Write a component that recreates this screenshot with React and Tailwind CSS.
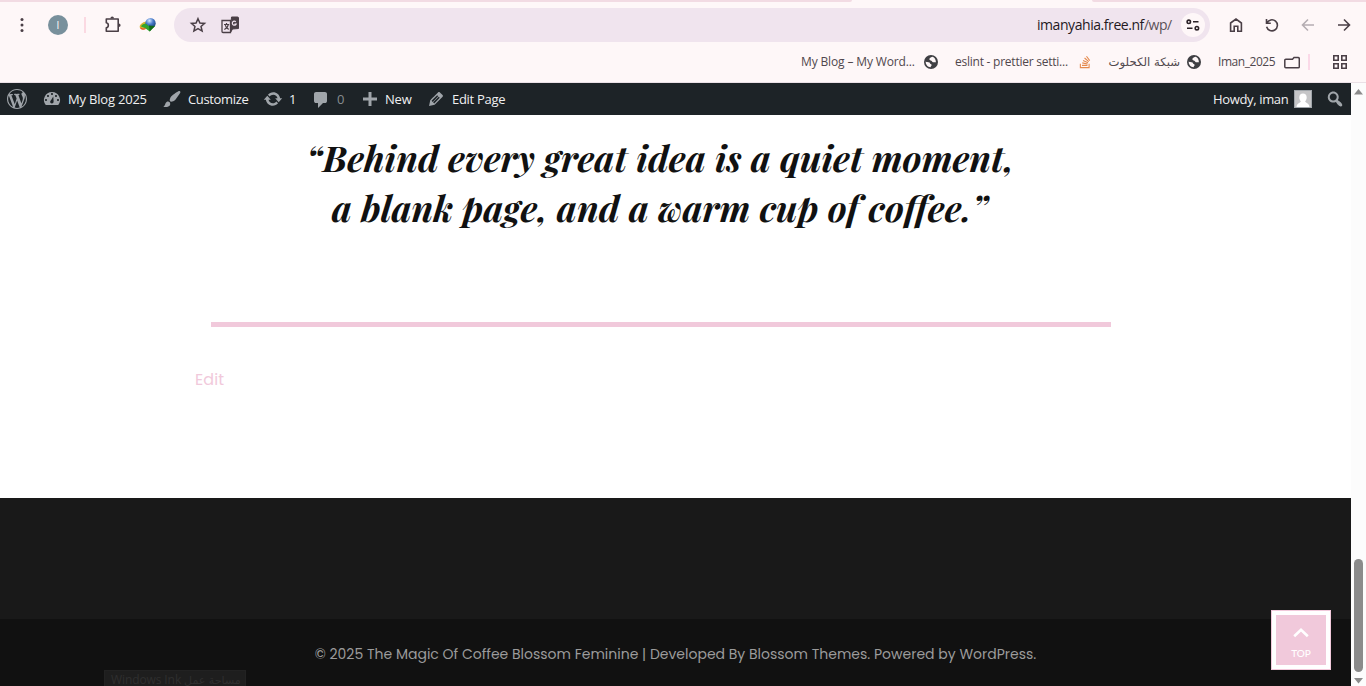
import React from "react";
import { FaStackOverflow } from "react-icons/fa";

const SEGOE = "font-['Open_Sans','Noto_Sans',sans-serif] whitespace-nowrap shrink-0";

function Dash({ d, className }) {
  return (
    <svg viewBox="0 0 20 20" className={`h-5 w-5 shrink-0 ${className}`} fill="#a0a5aa" fillRule="evenodd">
      <path d={d} />
    </svg>
  );
}

const ICONS = {
  wordpress:
    "M20 10c0-5.51-4.49-10-10-10C4.48 0 0 4.49 0 10c0 5.52 4.48 10 10 10 5.51 0 10-4.48 10-10zM7.78 15.37L4.37 6.22c.55-.02 1.17-.08 1.17-.08.5-.06.44-1.13-.06-1.11 0 0-1.45.11-2.37.11-.18 0-.37 0-.58-.01C4.12 2.69 6.87 1.11 10 1.11c2.33 0 4.45.87 6.05 2.34-.68-.11-1.65.39-1.65 1.58 0 .74.45 1.36.9 2.1.35.61.55 1.36.55 2.46 0 1.49-1.4 5-1.4 5l-3.03-8.37c.54-.02.82-.17.82-.17.5-.05.44-1.25-.06-1.22 0 0-1.44.12-2.38.12-.87 0-2.33-.12-2.33-.12-.5-.03-.56 1.2-.06 1.22l.92.08 1.26 3.41zM17.41 10c.24-.64.74-1.87.43-4.25.7 1.29 1.05 2.71 1.05 4.25 0 3.29-1.73 6.24-4.4 7.78.97-2.59 1.94-5.2 2.92-7.78zM6.1 18.09C3.12 16.65 1.11 13.53 1.11 10c0-1.3.23-2.48.72-3.59C3.25 10.3 4.67 14.2 6.1 18.09zm4.03-6.63l2.58 6.98c-.86.29-1.76.45-2.71.45-.79 0-1.57-.11-2.29-.33.81-2.38 1.62-4.74 2.42-7.1z",
  dashboard:
    "M3.76 16h12.48A7.998 7.998 0 0 0 10 3a7.998 7.998 0 0 0-6.24 13zM10 4c.55 0 1 .45 1 1s-.45 1-1 1-1-.45-1-1 .45-1 1-1zM6 6c.55 0 1 .45 1 1s-.45 1-1 1-1-.45-1-1 .45-1 1-1zm8 0c.55 0 1 .45 1 1s-.45 1-1 1-1-.45-1-1 .45-1 1-1zM11.3 7.4l.3 5.1c0 1.1-.7 2-1.7 2s-1.9-.9-1.7-2c.1-.6.5-1 .8-1.3zM4 10c.55 0 1 .45 1 1s-.45 1-1 1-1-.45-1-1 .45-1 1-1zm12 0c.55 0 1 .45 1 1s-.45 1-1 1-1-.45-1-1 .45-1 1-1z",
  brush:
    "M18.33 3.57s.27-.8-.31-1.36c-.53-.52-1.22-.24-1.22-.24-.61.3-5.76 3.47-7.67 5.57-.86.96-2.06 3.79-1.09 4.82.92.98 3.96-.17 4.79-1 2.06-2.06 5.21-7.17 5.5-7.79zM1.4 17.65c2.37-1.56 1.46-3.41 3.23-4.64.93-.65 2.22-.62 3.08.29.63.67.8 2.57-.16 3.46-1.57 1.45-4 1.55-6.15.89z",
  update:
    "M10.2 3.28c3.53 0 6.43 2.61 6.92 6h2.08l-3.5 4-3.5-4h2.32c-.45-1.97-2.21-3.45-4.32-3.45-1.45 0-2.73.71-3.54 1.78L4.95 5.66C6.23 4.2 8.11 3.28 10.2 3.28zm-.4 13.44c-3.52 0-6.43-2.61-6.92-6H.8l3.5-4c1.17 1.33 2.33 2.67 3.5 4H5.48c.45 1.97 2.21 3.45 4.32 3.45 1.45 0 2.73-.71 3.54-1.78l1.71 1.95c-1.28 1.46-3.15 2.38-5.25 2.38z",
  comment:
    "M5 2h9q.82 0 1.41.59T16 4v7q0 .82-.59 1.41T14 13h-2l-5 5v-5H5q-.82 0-1.41-.59T3 11V4q0-.82.59-1.41T5 2z",
  plus: "M17 8.5v3h-5.5V17h-3v-5.5H3v-3h5.5V3h3v5.5z",
  edit: "M13.89 3.39l2.71 2.72c.46.46.42 1.24.03 1.64l-8.01 8.02-5.56 1.16 1.16-5.58s7.6-7.63 7.99-8.03c.39-.39 1.22-.39 1.68.07zm-2.73 2.79l-5.59 5.61 1.11 1.11 5.54-5.65zm-2.97 8.23l5.58-5.6-1.07-1.08-5.59 5.6z",
  search:
    "M12.14 4.18c1.87 1.87 2.11 4.75.72 6.89.12.1.22.21.36.31.2.16.47.36.81.59.34.24.56.39.66.47.42.31.73.57.94.78.32.32.6.65.84 1 .25.35.44.69.59 1.04.14.35.21.68.18 1-.02.32-.14.59-.36.81s-.49.34-.81.36c-.31.02-.65-.04-.99-.19-.35-.14-.7-.34-1.04-.59-.35-.24-.68-.52-1-.84-.21-.21-.47-.52-.77-.93-.1-.13-.25-.35-.47-.66-.22-.32-.4-.57-.56-.78-.16-.2-.29-.35-.44-.5-2.07 1.09-4.69.76-6.44-.98-2.14-2.15-2.14-5.64 0-7.78 2.15-2.15 5.63-2.15 7.78 0zm-1.41 6.36c1.36-1.37 1.36-3.58 0-4.95-1.37-1.37-3.59-1.37-4.95 0-1.37 1.37-1.37 3.58 0 4.95 1.36 1.37 3.58 1.37 4.95 0z",
};

function Globe({ className }) {
  return (
    <svg viewBox="0 0 14 14" className={`h-[14px] w-[14px] shrink-0 ${className}`}>
      <circle cx="7" cy="7" r="7" fill="#3f3f43" />
      <path d="M8.600 1.800C7.200 1.800 7 2.600 6.100 3 5 3.500 5.200 4.600 6.100 5.200 7.200 5.700 7.600 5.500 8.100 6.400c.5.900 1.700 1.100 3.800.9.100-2.500-1.300-4.700-3.300-5.500z" fill="#fef7f8" />
      <path d="M1.700 6.500c1.200.8 2.200.5 3.300.8 1 .3.700 1.300 1.600 1.600.9.300 1.400.9.900 1.700-.5.600-.8 1-.9 1.700C3.700 12 1.500 9.600 1.700 6.500z" fill="#fef7f8" />
    </svg>
  );
}

function Toolbar() {
  return (
    <div className="flex h-[46px] items-center">
      <svg viewBox="0 0 4 16" className="ml-5 h-4 w-1 shrink-0" fill="#4a3f46">
        <circle cx="2" cy="2.500" r="1.500" /><circle cx="2" cy="8" r="1.500" /><circle cx="2" cy="13.500" r="1.500" />
      </svg>
      <div className={`${SEGOE} ml-6 flex h-5 w-5 items-center justify-center rounded-full bg-[#78909c] text-[10px] text-white`}>I</div>
      <div className="ml-4 h-4 w-0.5 bg-[#fbd9e2]" />
      <svg viewBox="0 0 18 18" className="ml-[18px] h-[18px] w-[18px] shrink-0" fill="none" stroke="#4a3f46" strokeWidth="1.600" strokeLinejoin="round">
        <path d="M2.300 3H14.200V15.200H2.300V11.900C5 11.400 5 7.200 2.300 6.700Z" />
        <path d="M6.400 2.400a1.800 1.800 0 0 1 3.600 0zM14.800 7.400a1.800 1.800 0 0 1 0 3.600z" fill="#4a3f46" stroke="none" />
      </svg>
      <svg viewBox="0 0 18 16" className="ml-[17px] h-4 w-[18px] shrink-0">
        <defs>
          <radialGradient id="orb" cx=".4" cy=".25" r=".8">
            <stop offset="0" stopColor="#d8ebff" /><stop offset=".45" stopColor="#4779ca" /><stop offset="1" stopColor="#143d70" />
          </radialGradient>
        </defs>
        <ellipse cx="6" cy="8.500" rx="5.600" ry="3.600" fill="#d8b52d" transform="rotate(-25 6 8.500)" />
        <circle cx="11.500" cy="6.300" r="5.200" fill="url(#orb)" />
        <path d="M2 9.500c1-2.500 3.500-3.300 5.500-2.500l2 2h6.500L10.700 14.500 6 11z" fill="#31a52e" />
        <path d="M10 8.500l5.800.5L10.700 14.500z" fill="#126818" />
        <path d="M1.500 10.800c1.500 1.600 3.500 1.500 5 .7" stroke="#e1552b" strokeWidth="1.200" fill="none" />
      </svg>
      <div className="ml-[17px] flex h-[34px] w-[1036px] shrink-0 items-center rounded-full bg-[#f0e4ee]">
        <svg viewBox="0 0 24 24" className="ml-[15px] h-[18px] w-[18px] shrink-0" fill="none" stroke="#4a3f46" strokeWidth="2">
          <path d="M12 3.600l2.550 5.700 6.200.6-4.700 4.100 1.400 6.100L12 16.900 6.550 20.100 7.950 14 3.250 9.900l6.200-.6z" />
        </svg>
        <svg viewBox="0 0 18 18" className="ml-[14px] h-[18px] w-[18px] shrink-0" fill="none" stroke="#4a3f46">
          <path d="M10.500 1h6a1 1 0 0 1 1 1v10.500l-6 .5-2 3.500z" fill="#4a3f46" />
          <path d="M1 4.500h8.500v12H2a1 1 0 0 1-1-1z" fill="#f0e4ee" strokeWidth="1.300" />
          <path d="M3 8.500h5.200M5.500 7v1.500M7.300 8.500c-.4 2.400-2 4.100-4 5M4.200 9.200c.6 2 2 3.500 3.500 4.200" strokeWidth="1.200" />
          <path d="M14.800 5.800a2 2 0 1 0 .4 2.200h-1.700" stroke="#f0e4ee" strokeWidth="1.200" />
        </svg>
        <div className={`${SEGOE} mb-px ml-[798px] w-[136px] text-[14px] tracking-[-0.44px] text-[#24191f]`}>
          imanyahia.free.nf<span className="text-[#5c5158]">/wp/</span>
        </div>
        <div className="ml-[8px] flex h-6 w-6 items-center justify-center rounded-full bg-[#fef7f8]">
          <svg viewBox="0 0 14 12" className="h-3 w-[14px]" fill="none" stroke="#2b2227" strokeWidth="1.600">
            <circle cx="2.800" cy="2.800" r="1.700" /><path d="M7 2.800h5.500M1 9.200h5.500" /><circle cx="10.900" cy="9.200" r="1.700" />
          </svg>
        </div>
      </div>
      <svg viewBox="0 0 14 16" className="ml-[19px] h-4 w-[14px] shrink-0" fill="none" stroke="#4a3f46" strokeWidth="1.600">
        <path d="M1.600 6L7 2l5.400 4v8.300H8.800V9.300H5.200v5H1.600z" />
      </svg>
      <svg viewBox="0 0 14 14" className="ml-[22px] h-[14px] w-[14px] shrink-0" fill="none" stroke="#4a3f46" strokeWidth="1.600">
        <path d="M1.500 1v4.300h4.300M1.900 5A5.500 5.500 0 1 1 1.600 8.800" />
      </svg>
      <svg viewBox="0 0 14 14" className="ml-[22px] h-[14px] w-[14px] shrink-0" fill="none" stroke="#b5adb2" strokeWidth="1.600">
        <path d="M13 7H2M7 1.500L1.500 7 7 12.500" />
      </svg>
      <svg viewBox="0 0 14 14" className="ml-[22px] h-[14px] w-[14px] shrink-0" fill="none" stroke="#4a3f46" strokeWidth="1.600">
        <path d="M1 7h11M7 1.500L12.500 7 7 12.500" />
      </svg>
    </div>
  );
}

function Bookmarks() {
  return (
    <div className={`${SEGOE} flex h-[28px] items-center text-[12px] text-[#50474d]`}>
      <div className="ml-[801px] w-[115px] shrink-0 tracking-[-0.14px]">My Blog – My Word...</div>
      <Globe className="ml-[8px]" />
      <div className="ml-[17px] w-[114px] shrink-0 tracking-[-0.24px]">eslint - prettier setti...</div>
      <FaStackOverflow className="ml-[9px] h-[14px] w-[14px] shrink-0 text-[#e58a4e]" />
      <div dir="rtl" className="mt-0.5 ml-[17px] w-[71px] shrink-0 font-['DejaVu_Sans',sans-serif] text-[11.7px]">شبكة الكحلوت</div>
      <Globe className="ml-[7px]" />
      <div className="ml-[17px] w-[58px] shrink-0 tracking-[-0.45px]">Iman_2025</div>
      <svg viewBox="0 0 16 13" className="ml-[8px] h-[13px] w-4 shrink-0" fill="none" stroke="#4a3f46" strokeWidth="1.500">
        <path d="M1.800 3.200h6.700l1.500-1.700h4a1.300 1.300 0 0 1 1.300 1.300v8a1 1 0 0 1-1 1H1.800a1 1 0 0 1-1-1V4.200a1 1 0 0 1 1-1z" />
      </svg>
      <div className="ml-[8px] h-4 w-0.5 bg-[#fbd9e8]" />
      <svg viewBox="0 0 14 14" className="ml-[23px] h-[14px] w-[14px] shrink-0" fill="none" stroke="#4a3f46" strokeWidth="1.600">
        <path d="M.8.800h4.400v4.400H.8zM8.800.800h4.400v4.400H8.800zM.8 8.800h4.400v4.400H.8zM8.800 8.800h4.400v4.400H8.800z" />
      </svg>
    </div>
  );
}

function AdminBar() {
  return (
    <div className={`${SEGOE} flex h-8 items-center bg-[#1d2327] text-[13px] leading-5 text-[#f0f0f1]`}>
      <Dash d={ICONS.wordpress} className="ml-[7px]" />
      <Dash d={ICONS.dashboard} className="ml-[15px]" />
      <div className="ml-[6px] w-[80px] shrink-0 tracking-[-0.2px]">My Blog 2025</div>
      <Dash d={ICONS.brush} className="ml-[14px]" />
      <div className="ml-[6px] w-[61px] shrink-0 tracking-[-0.35px]">Customize</div>
      <Dash d={ICONS.update} className="ml-[14px]" />
      <div className="ml-[6px] w-[8px] shrink-0">1</div>
      <Dash d={ICONS.comment} className="mt-px ml-[14px]" />
      <div className="ml-[6px] w-[8px] shrink-0 text-[#868c90]">0</div>
      <Dash d={ICONS.plus} className="ml-[15px]" />
      <div className="ml-[5px] w-[27px] shrink-0 tracking-[-0.2px]">New</div>
      <Dash d={ICONS.edit} className="ml-[14px]" />
      <div className="ml-[6px] w-[55px] shrink-0 tracking-[-0.3px]">Edit Page</div>
      <div className="ml-auto w-[76px] shrink-0 tracking-[-0.35px]">Howdy, iman</div>
      <svg viewBox="0 0 18 18" className="ml-[5px] h-[18px] w-[18px] shrink-0">
        <path d="M0 0h18v18H0z" fill="#a0a5aa" />
        <path d="M1 1h16v16H1z" fill="#c5c5c7" />
        <path d="M9 3.500c2.300 0 3.700 1.600 3.700 3.900 0 1.800-.8 3.100-1.600 3.900.3 1.500 3.900 1.600 4.400 5.700h-13c.5-4.100 4.100-4.200 4.400-5.700-.8-.8-1.600-2.100-1.600-3.900 0-2.300 1.400-3.900 3.700-3.900z" fill="#fff" />
      </svg>
      <Dash d={ICONS.search} className="mr-[6px] ml-[13px]" />
    </div>
  );
}

function ScrollBar() {
  return (
    <div className="flex h-[603px] w-[15px] shrink-0 flex-col items-center bg-[#fcfcfc]">
      <svg viewBox="0 0 9 6" className="mt-[6px] h-[6px] w-[9px]"><path d="M4.500 0L9 5.500H0z" fill="#8b8b8b" /></svg>
      <div className="mt-[464px] h-[113px] w-[9px] rounded-full bg-[#8b8b8b]" />
      <svg viewBox="0 0 9 6" className="mt-[6px] h-[6px] w-[9px]"><path d="M4.500 5.500L9 0H0z" fill="#8b8b8b" /></svg>
    </div>
  );
}

export default function App() {
  return (
    <div className="relative h-[686px] w-[1366px] overflow-hidden bg-white">
      <header className="h-[83px] border-b border-[#eae0e6] bg-[#fef7f8]">
        <div className="flex h-0.5 justify-between">
          <div className="w-[852px] rounded-br-full bg-[#f2dbe3]" />
          <div className="w-[274px] rounded-bl-full bg-[#f2dbe3]" />
        </div>
        <Toolbar />
        <Bookmarks />
      </header>
      <div className="flex">
        <div className="w-[1351px]">
          <AdminBar />
          <main className="h-[383px] pt-[17px]">
            <blockquote className="ml-[210px] w-[900px] text-center font-['Playfair_Display','Liberation_Serif',serif] text-[36px] leading-[50px] font-bold text-[#111] italic">
              “Behind every great idea is a quiet moment,
              <br />a blank page, and a warm cup of coffee.”
            </blockquote>
            <div className="mt-[90px] ml-[211px] h-[5px] w-[900px] bg-[#f1c9db]" />
            <a className="mt-[41px] ml-[195px] block w-max font-['Poppins','Inter',sans-serif] text-[16px] leading-[24px] tracking-[0.1px] text-[#f1c9db]">Edit</a>
          </main>
          <footer>
            <div className="h-[121px] bg-[#191919]" />
            <div className="h-[67px] bg-[#111] pt-[24px]">
              <p className="text-center font-['Poppins','Inter',sans-serif] text-[14px] leading-[22px] whitespace-nowrap text-[#9b9b9b]">
                © 2025 The Magic Of Coffee Blossom Feminine | Developed By Blossom Themes. Powered by WordPress.
              </p>
            </div>
          </footer>
        </div>
        <ScrollBar />
      </div>
      <div className="absolute top-[610px] left-[1271px] flex h-[60px] w-[60px] flex-col items-center border border-[#f1c9db] bg-[#f1c9db] pt-[17px] shadow-[inset_0_0_0_4px_#fff]">
        <svg viewBox="0 0 16 10" className="h-[10px] w-4" fill="none" stroke="#fff" strokeWidth="2.600"><path d="M1.200 8.300L8 1.800l6.800 6.500" /></svg>
        <span className="mt-[9px] font-['Lato',sans-serif] text-[10px] leading-[12px] font-medium text-white">TOP</span>
      </div>
      <div className={`${SEGOE} absolute top-[670px] left-[104px] h-4 w-[142px] border border-b-0 border-[#222] bg-[#1e1e1e] pl-[6px] text-[12px] leading-[17px] tracking-[-0.1px] text-[#2f2f2f]`}>
        Windows Ink <span className="font-['DejaVu_Sans',sans-serif] text-[11px]">مساحة عمل</span>
      </div>
    </div>
  );
}
